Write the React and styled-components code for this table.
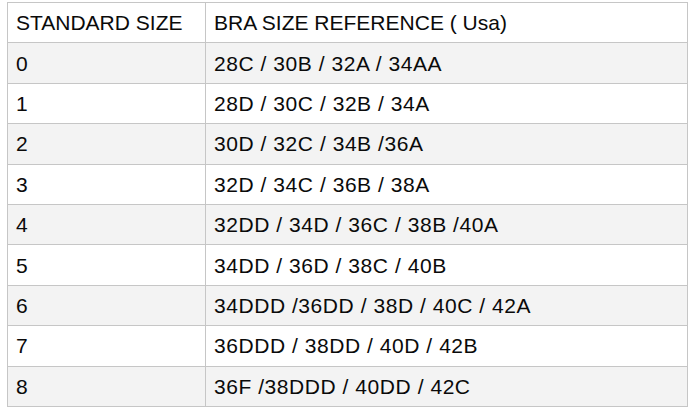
import styled, { createGlobalStyle } from "styled-components";

const GlobalStyle = createGlobalStyle`
    html, body {
        margin: 0;
        padding: 0;
        background: #ffffff;
    }
`;

const Page = styled.div`
    padding: 2px 0 0 7px;
    font-family: "Liberation Sans", Arial, Helvetica, sans-serif;
`;

const Table = styled.table`
    width: 681px;
    border-collapse: collapse;
    table-layout: fixed;
    color: #0a0a0a;
    font-size: 21px;
`;

const Row = styled.tr`
    background: ${props => props.shaded ? '#f3f3f3' : '#ffffff'};
    letter-spacing: ${props => props.header ? '0' : '0.55px'};
`;

const Cell = styled.td`
    height: 39.4px;
    padding: 0 0 0 8px;
    border: 1px solid #c6c6c6;
    vertical-align: middle;
    white-space: nowrap;
    line-height: 1;
    &:first-child {
        width: 189px;
        padding-left: 8px;
    }
`;

const sizes = [
    ["0", "28C / 30B / 32A / 34AA"],
    ["1", "28D / 30C / 32B / 34A"],
    ["2", "30D / 32C / 34B /36A"],
    ["3", "32D / 34C / 36B / 38A"],
    ["4", "32DD / 34D / 36C / 38B /40A"],
    ["5", "34DD / 36D / 38C / 40B"],
    ["6", "34DDD /36DD / 38D / 40C / 42A"],
    ["7", "36DDD / 38DD / 40D / 42B"],
    ["8", "36F /38DDD / 40DD / 42C"],
];

export default function App() {
    return (
        <>
            <GlobalStyle />
            <Page>
                <Table>
                    <tbody>
                        <Row header>
                            <Cell>STANDARD SIZE</Cell>
                            <Cell>BRA SIZE REFERENCE ( Usa)</Cell>
                        </Row>
                        {sizes.map(([std, bra], i) => (
                            <Row key={std} shaded={i % 2 === 0}>
                                <Cell>{std}</Cell>
                                <Cell>{bra}</Cell>
                            </Row>
                        ))}
                    </tbody>
                </Table>
            </Page>
        </>
    );
}
